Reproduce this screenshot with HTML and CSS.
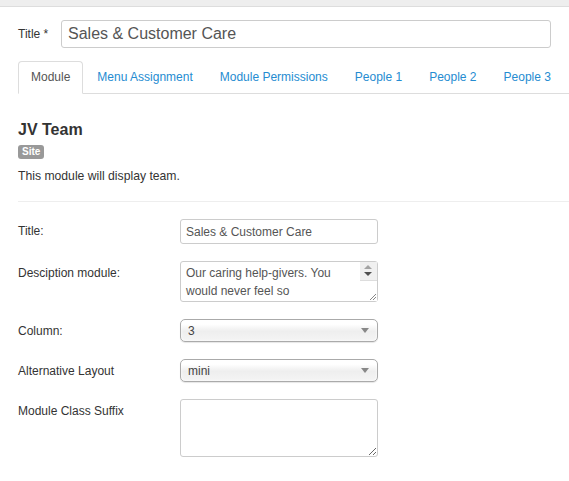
FILE: index.html
```html
<!DOCTYPE html>
<html lang="en">
  <head>
    <meta charset="UTF-8" />
    <title>Module: JV Team</title>
    <link rel="stylesheet" href="styles.css">
  </head>
  <body>
    <div class="topbar"></div>

    <div class="page">
      <div class="title-row">
        <label class="title-label" for="jform_title">Title *</label>
        <input class="title-input" id="jform_title" type="text" value="Sales &amp; Customer Care" />
      </div>

      <!-- Tabs -->
      <ul class="tabs">
        <li class="tab active"><a href="#">Module</a></li>
        <li class="tab"><a href="#">Menu Assignment</a></li>
        <li class="tab"><a href="#">Module Permissions</a></li>
        <li class="tab"><a href="#">People 1</a></li>
        <li class="tab"><a href="#">People 2</a></li>
        <li class="tab"><a href="#">People 3</a></li>
      </ul>

      <div class="module-info">
        <h3 class="module-name">JV Team</h3>
        <span class="badge">Site</span>
        <p class="module-desc">This module will display team.</p>
      </div>

      <hr class="divider" />

      <!-- Options -->
      <div class="control-group">
        <label class="control-label">Title:</label>
        <input class="field" type="text" value="Sales &amp; Customer Care" />
      </div>

      <div class="control-group">
        <label class="control-label">Desciption module:</label>
        <div class="field fake-area">
          <div class="fake-text">Our caring help-givers. You would never feel so</div>
          <div class="fake-scroll">
            <span class="arrow up"></span>
            <span class="arrow down"></span>
            <span class="grip">
              <svg width="9" height="9" viewBox="0 0 9 9">
                <path d="M8 2 L2 8 M8 5 L5 8" stroke="#888" stroke-width="1" />
              </svg>
            </span>
          </div>
        </div>
      </div>

      <div class="control-group">
        <label class="control-label">Column:</label>
        <div class="field select"><span>3</span><b class="caret"></b></div>
      </div>

      <div class="control-group">
        <label class="control-label">Alternative Layout</label>
        <div class="field select"><span>mini</span><b class="caret"></b></div>
      </div>

      <div class="control-group">
        <label class="control-label">Module Class Suffix</label>
        <textarea class="field area"></textarea>
      </div>
    </div>
  </body>
</html>
```

FILE: styles.css
```css
body {
  margin: 0;
  font-family: 'Liberation Sans', Arial, sans-serif;
  font-size: 12px;
  color: #333;
  background: #fff;
}

.topbar {
  height: 6px;
  background: #eee;
  border-bottom: 1px solid #ddd;
}

.page {
  padding-left: 18px;
}

.title-row {
  display: flex;
  align-items: center;
  margin-top: 13px;
}

.title-label {
  width: 43px;
  font-size: 12px;
  color: #333;
}

.title-input {
  box-sizing: border-box;
  width: 490px;
  height: 28px;
  padding: 2px 6px;
  border: 1px solid #ccc;
  border-radius: 3px;
  font-family: inherit;
  font-size: 16px;
  color: #555;
}

.tabs {
  display: flex;
  list-style: none;
  margin: 13px 0 0;
  padding: 0;
  border-bottom: 1px solid #ddd;
}

.tab {
  flex-shrink: 0;
  margin-right: 1px;
  margin-bottom: -1px;
  white-space: nowrap;
}

.tab a {
  display: block;
  padding: 0 12px;
  line-height: 31px;
  font-size: 12px;
  color: #258cd1;
  text-decoration: none;
  border: 1px solid transparent;
  border-radius: 4px 4px 0 0;
}

.tab.active a {
  color: #555;
  background: #fff;
  border-color: #ddd #ddd transparent;
}

.module-info {
  padding-top: 26px;
}

.module-name {
  margin: 0;
  font-size: 16px;
  line-height: 20px;
  color: #333;
}

.badge {
  display: inline-block;
  margin-top: 5px;
  padding: 0 4px;
  background: #999;
  color: #fff;
  font-size: 10px;
  font-weight: bold;
  line-height: 14px;
  border-radius: 3px;
}

.module-desc {
  margin: 8px 0 0;
  font-size: 12.2px;
  line-height: 18px;
}

.divider {
  margin: 16px 0 17px;
  border: 0;
  border-top: 1px solid #eee;
}

.control-group {
  display: flex;
  align-items: flex-start;
  margin-bottom: 17px;
}

.control-label {
  width: 162px;
  padding-top: 5px;
  font-size: 12px;
  line-height: 14px;
}

.field {
  box-sizing: border-box;
  width: 198px;
  border: 1px solid #ccc;
  border-radius: 3px;
  font-family: inherit;
  font-size: 12px;
  color: #555;
  background: #fff;
}

input.field {
  height: 25px;
  padding: 0 5px;
}

.fake-area {
  display: flex;
  height: 41px;
}

.fake-text {
  flex: 1;
  padding: 2px 5px;
  line-height: 18px;
  overflow: hidden;
}

.fake-scroll {
  display: flex;
  flex-direction: column;
  width: 17px;
  background: #f0f0f0;
}

.arrow {
  height: 9px;
  position: relative;
}

.arrow::after {
  content: '';
  position: absolute;
  left: 4px;
  border-left: 4px solid transparent;
  border-right: 4px solid transparent;
}

.arrow.up::after {
  top: 3px;
  border-bottom: 4px solid #a3a3a3;
}

.arrow.down::after {
  top: 1px;
  border-top: 4px solid #505050;
}

.grip {
  flex: 1;
  display: flex;
  align-items: flex-end;
  justify-content: flex-end;
  background: #fff;
  border-top: 1px solid #ddd;
}

.grip svg {
  display: block;
}

.select {
  display: flex;
  align-items: center;
  justify-content: space-between;
  height: 23px;
  padding: 0 8px 0 7px;
  border-color: #aaa;
  border-radius: 5px;
  background: linear-gradient(#fff 20%, #f0f0f0 50%, #eee 52%, #f4f4f4);
  box-shadow: 0 0 3px #fff inset, 0 1px 1px rgba(0, 0, 0, 0.1);
  color: #444;
}

.caret {
  border-left: 4px solid transparent;
  border-right: 4px solid transparent;
  border-top: 5px solid #888;
}

.area {
  display: block;
  height: 58px;
  padding: 4px 6px;
  margin: 0;
}
```
